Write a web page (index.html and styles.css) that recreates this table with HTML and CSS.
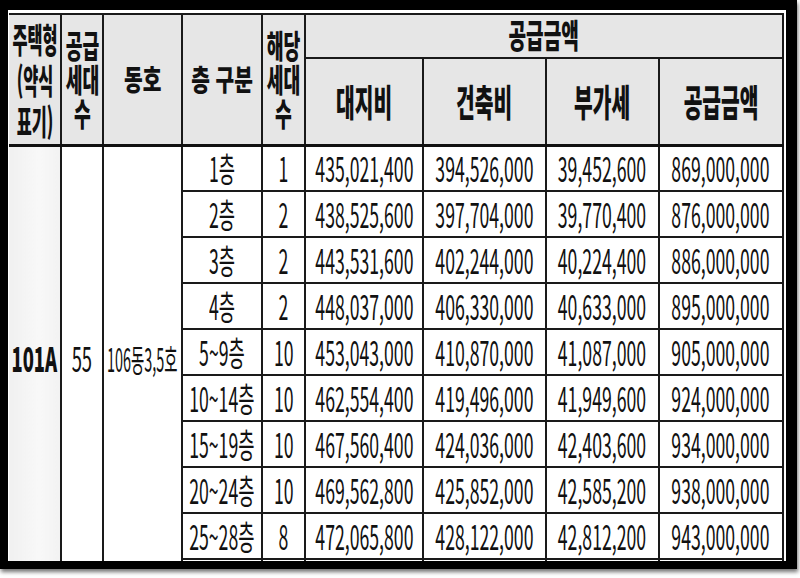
FILE: index.html
```html
<!DOCTYPE html>
<html lang="ko">
<head>
<meta charset="utf-8">
<link rel="stylesheet" href="styles.css">
</head>
<body>
<div class="frame">
  <div class="paper">
    <table class="price">
      <colgroup>
        <col class="c1"><col class="c2"><col class="c3"><col class="c4"><col class="c5">
        <col class="c6"><col class="c7"><col class="c8"><col class="c9">
      </colgroup>
      <thead>
        <tr class="hr1">
          <th rowspan="2" class="first"><span class="sq hs1">주택형<br>(약식<br>표기)</span></th>
          <th rowspan="2"><span class="sq hs2">공급<br>세대<br>수</span></th>
          <th rowspan="2"><span class="sq hm">동호</span></th>
          <th rowspan="2"><span class="sq hm">층 구분</span></th>
          <th rowspan="2"><span class="sq hs2">해당<br>세대<br>수</span></th>
          <th colspan="4"><span class="sq ht">공급금액</span></th>
        </tr>
        <tr class="hr2">
          <th><span class="sq hsub">대지비</span></th>
          <th><span class="sq hsub">건축비</span></th>
          <th><span class="sq hsub">부가세</span></th>
          <th><span class="sq hsub">공급금액</span></th>
        </tr>
      </thead>
      <tbody>
        <tr>
          <td rowspan="10" class="first"><span class="sq big b">101A</span></td>
          <td rowspan="10"><span class="sq big">55</span></td>
          <td rowspan="10"><span class="sq dong">106동3,5호</span></td>
          <td><span class="sq n">1층</span></td>
          <td><span class="sq n">1</span></td>
          <td><span class="sq n">435,021,400</span></td>
          <td><span class="sq n">394,526,000</span></td>
          <td><span class="sq n">39,452,600</span></td>
          <td><span class="sq n">869,000,000</span></td>
        </tr>
        <tr>
          <td><span class="sq n">2층</span></td>
          <td><span class="sq n">2</span></td>
          <td><span class="sq n">438,525,600</span></td>
          <td><span class="sq n">397,704,000</span></td>
          <td><span class="sq n">39,770,400</span></td>
          <td><span class="sq n">876,000,000</span></td>
        </tr>
        <tr>
          <td><span class="sq n">3층</span></td>
          <td><span class="sq n">2</span></td>
          <td><span class="sq n">443,531,600</span></td>
          <td><span class="sq n">402,244,000</span></td>
          <td><span class="sq n">40,224,400</span></td>
          <td><span class="sq n">886,000,000</span></td>
        </tr>
        <tr>
          <td><span class="sq n">4층</span></td>
          <td><span class="sq n">2</span></td>
          <td><span class="sq n">448,037,000</span></td>
          <td><span class="sq n">406,330,000</span></td>
          <td><span class="sq n">40,633,000</span></td>
          <td><span class="sq n">895,000,000</span></td>
        </tr>
        <tr>
          <td><span class="sq n">5~9층</span></td>
          <td><span class="sq n">10</span></td>
          <td><span class="sq n">453,043,000</span></td>
          <td><span class="sq n">410,870,000</span></td>
          <td><span class="sq n">41,087,000</span></td>
          <td><span class="sq n">905,000,000</span></td>
        </tr>
        <tr>
          <td><span class="sq n">10~14층</span></td>
          <td><span class="sq n">10</span></td>
          <td><span class="sq n">462,554,400</span></td>
          <td><span class="sq n">419,496,000</span></td>
          <td><span class="sq n">41,949,600</span></td>
          <td><span class="sq n">924,000,000</span></td>
        </tr>
        <tr>
          <td><span class="sq n">15~19층</span></td>
          <td><span class="sq n">10</span></td>
          <td><span class="sq n">467,560,400</span></td>
          <td><span class="sq n">424,036,000</span></td>
          <td><span class="sq n">42,403,600</span></td>
          <td><span class="sq n">934,000,000</span></td>
        </tr>
        <tr>
          <td><span class="sq n">20~24층</span></td>
          <td><span class="sq n">10</span></td>
          <td><span class="sq n">469,562,800</span></td>
          <td><span class="sq n">425,852,000</span></td>
          <td><span class="sq n">42,585,200</span></td>
          <td><span class="sq n">938,000,000</span></td>
        </tr>
        <tr>
          <td><span class="sq n">25~28층</span></td>
          <td><span class="sq n">8</span></td>
          <td><span class="sq n">472,065,800</span></td>
          <td><span class="sq n">428,122,000</span></td>
          <td><span class="sq n">42,812,200</span></td>
          <td><span class="sq n">943,000,000</span></td>
        </tr>
        <tr class="cut">
          <td></td><td></td><td></td><td></td><td></td><td></td>
        </tr>
      </tbody>
    </table>
  </div>
</div>
</body>
</html>
```

FILE: styles.css
```css
html, body {
  margin: 0;
  padding: 0;
  background: #ffffff;
}

body {
  width: 800px;
  height: 578px;
  overflow: hidden;
  font-family: "Noto Sans CJK KR", "Noto Sans", sans-serif;
  color: #111;
}

.frame {
  width: 797px;
  height: 569px;
  background: #000;
  box-sizing: border-box;
  padding: 10px 11px 8px 8px;
  box-shadow: 1px 3px 4px rgba(0, 0, 0, 0.55);
}

.paper {
  width: 100%;
  height: 100%;
  background: #fff;
  overflow: hidden;
  box-sizing: border-box;
  padding: 3px 0 0 1px;
}

.price {
  border-collapse: collapse;
  table-layout: fixed;
  width: 775px;
}

.c1 { width: 52px; }
.c2 { width: 42px; }
.c3 { width: 79px; }
.c4 { width: 80px; }
.c5 { width: 43px; }
.c6 { width: 118px; }
.c7 { width: 122px; }
.c8 { width: 113px; }
.c9 { width: 124px; }

.price th,
.price td {
  border: 2px solid #1a1a1a;
  padding: 0;
  text-align: center;
  vertical-align: middle;
  white-space: nowrap;
}

.price th.first,
.price td.first {
  border-left: none;
}

.price th {
  background: #e6e6e6;
  font-weight: 900;
}

.price thead tr:last-child th,
.price thead th[rowspan] {
  border-bottom: 3px solid #111;
}

.price td.first {
  background: linear-gradient(90deg, #f0f0f0 0%, #f8f8f8 60%, #f2f2f2 100%);
}

.hr1 { height: 44px; }
.hr2 { height: 87px; }
.price tbody tr { height: 46px; }
.price tbody tr.cut { height: 12px; }

.sq {
  display: inline-block;
  transform-origin: center center;
}

.hs1 {
  font-size: 34px;
  line-height: 41px;
  transform: scaleX(0.48);
  margin: 0 -30px;
}

.hs2 {
  font-size: 32px;
  line-height: 34px;
  transform: scaleX(0.57);
  margin: 0 -20px;
}

.hm {
  font-size: 29px;
  line-height: 32px;
  transform: scaleX(0.7);
  margin: 0 -20px;
}

.ht {
  font-size: 33px;
  line-height: 36px;
  transform: scaleX(0.58);
  margin-top: -4px;
}

.hsub {
  font-size: 37px;
  line-height: 40px;
  transform: scaleX(0.55);
  margin: 0 -20px;
}

.n {
  font-size: 34px;
  line-height: 40px;
  font-weight: 400;
  transform: scaleX(0.52);
  margin: 0 -60px;
}

.big {
  font-size: 34px;
  line-height: 40px;
  transform: scaleX(0.54);
  margin: 0 -30px;
}

.big.b {
  font-weight: 900;
}

.dong {
  font-size: 32px;
  line-height: 40px;
  transform: scaleX(0.45);
  margin: 0 -60px;
}
```
